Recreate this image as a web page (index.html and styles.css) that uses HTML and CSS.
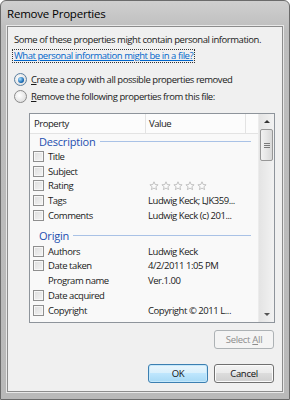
FILE: index.html
```html
<!DOCTYPE html>
<html lang="en">
<head>
  <meta charset="UTF-8">
  <title>Remove Properties</title>
  <link rel="stylesheet" href="styles.css">
</head>
<body>
  <div class="window">
    <div class="titlebar">Remove Properties</div>
    <div class="client">
      <p class="intro">Some of these properties might contain personal information.</p>
      <div class="link-line"><a class="help-link" href="#">What personal information might be in a file?</a></div>
      <div class="options">
        <label class="option"><span class="radio checked"></span><span><u>C</u>reate a copy with all possible properties removed</span></label>
        <label class="option"><span class="radio"></span><span><u>R</u>emove the following properties from this file:</span></label>
      </div>

      <div class="listbox">
        <div class="list-main">
          <div class="list-head">
            <div class="col-prop">Property</div>
            <div class="col-val">Value</div>
            <div class="col-rest"></div>
          </div>

          <div class="group"><span>Description</span></div>
          <div class="row"><span class="check"></span><span class="name">Title</span><span class="value"></span></div>
          <div class="row"><span class="check"></span><span class="name">Subject</span><span class="value"></span></div>
          <div class="row"><span class="check"></span><span class="name">Rating</span>
            <span class="value stars">
              <svg viewBox="0 0 10 10"><path d="M5 .8l1.2 2.7 2.9.3-2.2 1.9.7 2.9L5 7.1 2.4 8.6l.7-2.9L.9 3.8l2.9-.3z"/></svg>
              <svg viewBox="0 0 10 10"><path d="M5 .8l1.2 2.7 2.9.3-2.2 1.9.7 2.9L5 7.1 2.4 8.6l.7-2.9L.9 3.8l2.9-.3z"/></svg>
              <svg viewBox="0 0 10 10"><path d="M5 .8l1.2 2.7 2.9.3-2.2 1.9.7 2.9L5 7.1 2.4 8.6l.7-2.9L.9 3.8l2.9-.3z"/></svg>
              <svg viewBox="0 0 10 10"><path d="M5 .8l1.2 2.7 2.9.3-2.2 1.9.7 2.9L5 7.1 2.4 8.6l.7-2.9L.9 3.8l2.9-.3z"/></svg>
              <svg viewBox="0 0 10 10"><path d="M5 .8l1.2 2.7 2.9.3-2.2 1.9.7 2.9L5 7.1 2.4 8.6l.7-2.9L.9 3.8l2.9-.3z"/></svg>
            </span>
          </div>
          <div class="row"><span class="check"></span><span class="name">Tags</span><span class="value">Ludwig Keck; LJK359...</span></div>
          <div class="row"><span class="check"></span><span class="name">Comments</span><span class="value">Ludwig Keck (c) 201...</span></div>

          <div class="group second"><span>Origin</span></div>
          <div class="row"><span class="check"></span><span class="name">Authors</span><span class="value">Ludwig Keck</span></div>
          <div class="row"><span class="check"></span><span class="name">Date taken</span><span class="value">4/2/2011 1:05 PM</span></div>
          <div class="row"><span class="nocheck"></span><span class="name">Program name</span><span class="value">Ver.1.00</span></div>
          <div class="row"><span class="check"></span><span class="name">Date acquired</span><span class="value"></span></div>
          <div class="row"><span class="check"></span><span class="name">Copyright</span><span class="value">Copyright &copy; 2011 L...</span></div>
        </div>

        <div class="scrollbar">
          <div class="sb-btn"><span class="arrow-up"></span></div>
          <div class="sb-track">
            <div class="sb-thumb"><span></span><span></span><span></span></div>
          </div>
          <div class="sb-btn"><span class="arrow-down"></span></div>
        </div>
      </div>

      <div class="select-row">
        <button class="btn" disabled>Select <u>A</u>ll</button>
      </div>
      <div class="footer">
        <button class="btn default">OK</button>
        <button class="btn">Cancel</button>
      </div>
    </div>
  </div>
</body>
</html>
```

FILE: styles.css
```css
body {
  margin: 0;
  background: #fff;
  font-family: "Open Sans", "Noto Sans", sans-serif;
  font-size: 9.5px;
  letter-spacing: -0.45px;
  color: #1a1a1a;
}
.window {
  width: 290px;
  height: 400px;
  box-sizing: border-box;
  border: 1px solid #6b6b6b;
  border-radius: 6px 6px 0 0;
  background: linear-gradient(#cfcfcf, #bdbdbd 30px, #b9b9b9);
  display: flex;
  flex-direction: column;
}
.titlebar {
  height: 25px;
  line-height: 25px;
  padding-left: 6px;
  font-size: 11.5px;
  letter-spacing: -0.2px;
  color: #000;
}
.client {
  margin: 0 6px 0 6px;
  height: 366px;
  box-sizing: border-box;
  border: 1px solid #8c8c8c;
  box-shadow: 0 0 0 1px #e8e8e8;
  background: #f0f0f0;
  padding: 6px 7px 0 6px;
  display: flex;
  flex-direction: column;
}
.intro {
  margin: 0;
  line-height: 13px;
  height: 13px;
  white-space: nowrap;
}
.link-line {
  margin-top: 3px;
  height: 14px;
}
.help-link {
  color: #0066cc;
  line-height: 12px;
  display: inline-block;
  outline: 1px dotted #333;
  padding: 0 1px 0 1px;
  margin-left: -1px;
  white-space: nowrap;
}
.options {
  margin-top: 8px;
  display: flex;
  flex-direction: column;
}
.option {
  height: 17px;
  display: flex;
  align-items: center;
  gap: 4px;
  white-space: nowrap;
}
.radio {
  width: 11px;
  height: 11px;
  border-radius: 50%;
  border: 1px solid #8a8a8a;
  background: radial-gradient(circle at 40% 40%, #fff, #e2e2e2 70%, #cfcfcf);
  display: flex;
  align-items: center;
  justify-content: center;
  flex: none;
}
.radio.checked {
  border-color: #5a7fa0;
}
.radio.checked::after {
  content: "";
  width: 6px;
  height: 6px;
  border-radius: 50%;
  background: radial-gradient(circle at 35% 35%, #a8e0ff, #1d6fb8 60%, #0a3f7a);
}

.listbox {
  margin: 8px 0 0 15px;
  height: 210px;
  box-sizing: border-box;
  border: 1px solid #8e949b;
  background: #f9f9f9;
  display: flex;
}
.list-main {
  flex: 1;
  min-width: 0;
}
.list-head {
  height: 19px;
  display: flex;
  background: #fcfcfc;
  border-bottom: 1px solid #e3e3e3;
  line-height: 19px;
}
.col-prop {
  width: 111px;
  padding-left: 4px;
  border-right: 1px solid #e3e3e3;
}
.col-val {
  width: 96px;
  padding-left: 3px;
  border-right: 1px solid #e3e3e3;
}
.col-rest {
  flex: 1;
}
.group {
  height: 15px;
  display: flex;
  align-items: center;
  padding-left: 9px;
  padding-right: 7px;
  gap: 4px;
  color: #1e4fb0;
  font-size: 11px;
  letter-spacing: -0.2px;
}
.group::after {
  content: "";
  flex: 1;
  height: 1px;
  background: #a9c2e6;
}
.group.second {
  margin-top: 5px;
  height: 16px;
}
.row {
  height: 14.75px;
  display: flex;
  align-items: center;
  white-space: nowrap;
}
.check, .nocheck {
  width: 11px;
  height: 11px;
  box-sizing: border-box;
  margin-left: 3px;
  flex: none;
}
.check {
  border: 1px solid #8f8f8f;
  background: linear-gradient(135deg, #dedede, #f4f4f4);
  box-shadow: inset 0 0 0 1px #f7f7f7;
}
.name {
  width: 97px;
  margin-left: 4px;
}
.value {
  padding-left: 3px;
}
.stars {
  display: flex;
  gap: 2px;
  padding-left: 4px;
}
.stars svg {
  width: 10px;
  height: 10px;
  fill: #fbfbfb;
  stroke: #b5b5b5;
  stroke-width: 0.8;
}

.scrollbar {
  width: 15px;
  display: flex;
  flex-direction: column;
  background: linear-gradient(90deg, #e4e4e4, #f2f2f2);
  border-left: 1px solid #ececec;
}
.sb-btn {
  height: 15px;
  display: flex;
  align-items: center;
  justify-content: center;
}
.arrow-up {
  border-left: 3px solid transparent;
  border-right: 3px solid transparent;
  border-bottom: 3px solid #333;
}
.arrow-down {
  border-left: 3px solid transparent;
  border-right: 3px solid transparent;
  border-top: 3px solid #555;
}
.sb-track {
  flex: 1;
  padding: 0 1px;
}
.sb-thumb {
  height: 32px;
  box-sizing: border-box;
  border: 1px solid #979797;
  border-radius: 2px;
  background: linear-gradient(90deg, #f2f2f2, #e6e6e6 50%, #d8d8d8);
  display: flex;
  flex-direction: column;
  align-items: center;
  justify-content: center;
  gap: 1px;
}
.sb-thumb span {
  width: 6px;
  height: 1px;
  background: #7a7a7a;
}

.btn {
  width: 60px;
  height: 19px;
  padding: 0;
  font-family: inherit;
  font-size: 9.5px;
  letter-spacing: -0.3px;
  color: #111;
  border: 1px solid #707070;
  border-radius: 3px;
  background: linear-gradient(#f3f3f3, #ebebeb 45%, #dcdcdc 50%, #cfcfcf);
  box-shadow: inset 0 0 0 1px #fbfbfb;
}
.btn:disabled {
  color: #8d8d8d;
  border-color: #adb2b5;
  background: #f4f4f4;
  box-shadow: none;
}
.btn.default {
  border-color: #3c7fb1;
  background: linear-gradient(#eaf6fd, #d9f0fc 45%, #bee6fd 50%, #a7d9f5);
  box-shadow: inset 0 0 0 1px #c5e8fb;
}
.select-row {
  margin-top: 7px;
  display: flex;
  justify-content: flex-end;
  padding-right: 1px;
}
.footer {
  margin-top: 15px;
  display: flex;
  justify-content: flex-end;
  gap: 6px;
  padding-right: 1px;
}
```
